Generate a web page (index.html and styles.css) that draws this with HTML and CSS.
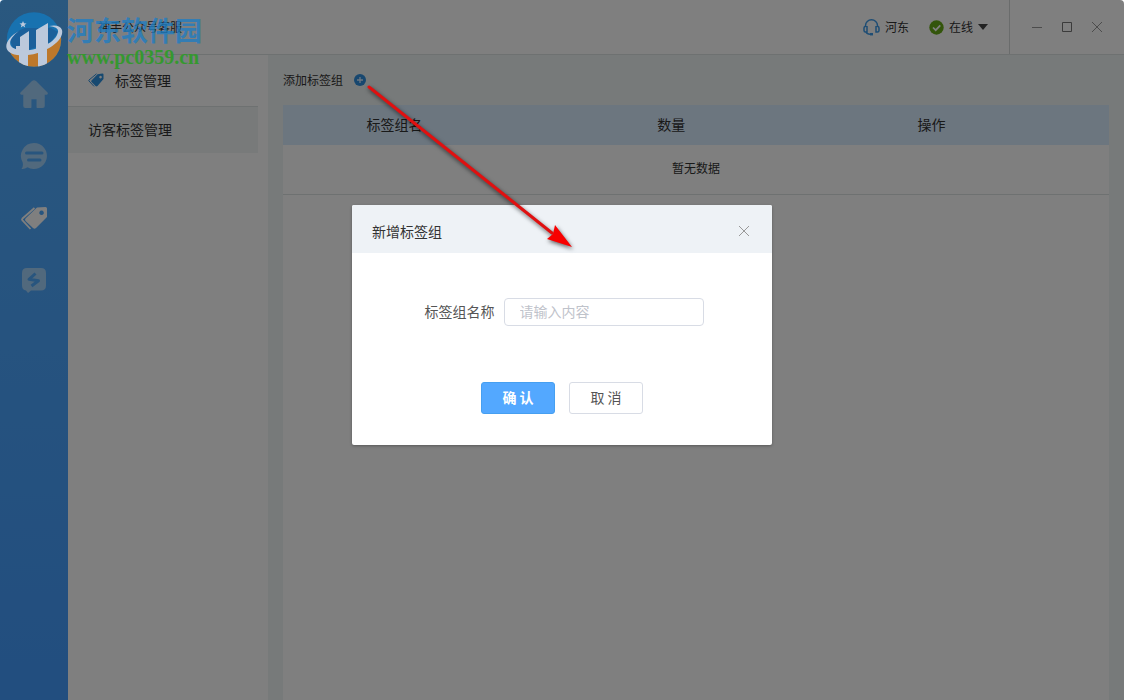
FILE: index.html
```html
<!DOCTYPE html>
<html lang="zh-CN">
<head>
<meta charset="utf-8">
<title>神手公众号客服</title>
<link rel="stylesheet" href="styles.css">
</head>
<body>
<div class="window">
  <nav class="rail" aria-label="主导航">
    <a class="rail-link" href="#home" aria-label="首页">
      <svg width="28" height="28" viewBox="0 0 28 28"><path fill="currentColor" stroke="currentColor" stroke-width="1.500" stroke-linejoin="round" d="M12.500 1.500Q14 .3 15.500 1.500L27 13Q27.300 14 26.500 14H24V26Q24 27.200 22.500 27.200H17.300V18.500H10.700V27.200H5.500Q4 27.200 4 26V14H1.500Q.7 14 1 13Z"/></svg>
    </a>
    <a class="rail-link" href="#chat" aria-label="会话">
      <svg width="28" height="28" viewBox="0 0 28 28"><path fill="currentColor" d="M14 1a13 13 0 1 1-6.500 24.300Q4.500 27.500 1.500 27q2-2 1.200-6.500A13 13 0 0 1 14 1Z"/><path class="cut" d="M6.500 11h15.500M8.500 18h11.500"/></svg>
    </a>
    <a class="rail-link active" href="#tags" aria-label="标签">
      <svg width="28" height="28" viewBox="0 0 28 28"><path fill="currentColor" fill-rule="evenodd" d="M17 3.500 25.500 3q1.500 0 1.500 1.500v8.500L16 24q-1.500 1.500-3 0L5.500 17q-1-1.200 0-2.500ZM21.500 6.500a2.300 2.300 0 1 0 .1 0Z"/><path fill="none" stroke="currentColor" stroke-width="1.800" d="M14.500 4 2.500 14.500q-1 1 0 2L10.500 25"/></svg>
    </a>
    <a class="rail-link" href="#quick" aria-label="快捷">
      <svg width="28" height="28" viewBox="0 0 28 28"><path fill="currentColor" d="M7 2h14q5 0 5 5v12.500q0 5-5 5H11L8 27l-2-2.600q-4-.5-4-4.900V7q0-5 5-5Z"/><path class="bolt" d="M15.500 7.500 9 13.300l9.500 1.400-7 5.300"/></svg>
    </a>
  </nav>

  <div class="workspace">
    <header class="titlebar">
      <h1 class="app-name">神手公众号客服</h1>
      <div class="account">
        <span class="user">
          <svg width="17" height="17" viewBox="0 0 17 17" fill="none" stroke="#3d9ae8" stroke-width="1.500"><path d="M2.500 8V6.500a6 5.700 0 0 1 12 0V8M4 7v6H2.500Q1 13 1 11.500V9Q1 7.500 2.500 7.500M13 7v6h1.500q1.500 0 1.500-1.500V9q0-1.500-1.500-1.500M3 13q1 2.200 4 2.200"/><path d="M7 15.200h3" stroke-width="2.500"/></svg>
          河东
        </span>
        <button class="status" type="button">
          <svg width="15" height="15" viewBox="0 0 15 15"><circle cx="7.500" cy="7.500" r="7.200" fill="#67ab16"/><path d="m4 7.500 2.700 2.700L11.300 5.300" fill="none" stroke="#fff" stroke-width="1.700"/></svg>
          在线
          <svg width="10" height="6" viewBox="0 0 10 6"><path d="M0 0h10L5 6Z" fill="#444"/></svg>
        </button>
      </div>
      <div class="controls">
        <button type="button" aria-label="最小化"><svg width="12" height="12" viewBox="0 0 12 12"><path d="M1 6.500h10"/></svg></button>
        <button class="maximize" type="button" aria-label="最大化"><svg width="12" height="12" viewBox="0 0 12 12"><path d="M1.500 1.500h9v9h-9Z"/></svg></button>
        <button type="button" aria-label="关闭"><svg width="12" height="12" viewBox="0 0 12 12"><path d="m1 1 10 10M11 1 1 11"/></svg></button>
      </div>
    </header>

    <div class="body">
      <aside class="side">
        <h2 class="side-title">
          <svg width="16" height="14" viewBox="0 0 16 14"><path fill="#2e92e0" fill-rule="evenodd" d="M9.500 1.200 14.500.5q1 0 1 1V6L9.500 13q-1 .8-2 0L3.500 9q-.8-.8 0-1.600ZM12.500 2.800a1.300 1.300 0 1 0 .1 0Z"/><path fill="none" stroke="#2e92e0" d="M8.500.8 1 7q-.5.500 0 1L6 13.400"/></svg>
          标签管理
        </h2>
        <a class="side-item" href="#visitor-tags">访客标签管理</a>
      </aside>
      <main class="content">
        <div class="toolbar">
          <span>添加标签组</span>
          <button class="add" type="button" aria-label="添加标签组"><svg width="12" height="12" viewBox="0 0 12 12"><circle cx="6" cy="6" r="6" fill="#2e8fde"/><path d="M6 3v6M3 6h6" stroke="#d8ebff" stroke-width="1.300"/></svg></button>
        </div>
        <div class="panel">
          <table class="groups">
            <colgroup><col class="col-name"><col class="col-count"><col class="col-action"><col></colgroup>
            <thead><tr><th scope="col">标签组名</th><th scope="col">数量</th><th scope="col">操作</th><td></td></tr></thead>
            <tbody><tr><td colspan="4">暂无数据</td></tr></tbody>
          </table>
        </div>
      </main>
    </div>
  </div>

  <div class="overlay">
    <form class="dialog" role="dialog" aria-modal="true" aria-labelledby="dialog-title">
      <div class="dialog-head">
        <h2 id="dialog-title">新增标签组</h2>
        <button class="close" type="button" aria-label="关闭"><svg width="12" height="12" viewBox="0 0 12 12"><path d="m1 1 10 10M11 1 1 11"/></svg></button>
      </div>
      <div class="field">
        <label for="group-name">标签组名称</label>
        <input id="group-name" type="text" placeholder="请输入内容">
      </div>
      <div class="actions">
        <button class="btn primary" type="button">确 认</button>
        <button class="btn" type="button">取 消</button>
      </div>
    </form>
  </div>

  <svg class="arrow" width="220" height="176" viewBox="0 0 220 176">
    <path d="M9 5 192 151" stroke="#e01010" stroke-width="3" stroke-linecap="round"/>
    <path d="M195 143 212 165 187 157 193 152Z" fill="#f80000"/>
  </svg>

  <div class="watermark">
    <svg width="58" height="58" viewBox="0 0 58 58">
      <defs><clipPath id="disc"><circle cx="29" cy="29.500" r="27.200"/></clipPath></defs>
      <g clip-path="url(#disc)">
        <path fill="#1872b0" d="M0 0h58v58H0Z"/>
        <path fill="#bd782b" d="M0 40Q32 50 58 24V58H0Z"/>
        <path fill="#1b609b" d="M5 30Q8 22 20 18L46 18 53 22 46 32 20 41 8 38Z"/>
        <path fill="#bcc9dc" d="M15 27 24 21V42H11V36H15ZM31 20 43 13V36L31 41Z"/>
        <path fill="#bcc9dc" d="M14 43h9v15h-9ZM33 42l9-4v20h-9Z"/>
      </g>
      <path fill="#bcc9dc" d="M14 21C-1 29-4 43 12 45 34 48 60 32 57 20Q55 14 44 16 54 17 53 22C51 33 31 42 15 40 1 38 3 29 14 21Z"/>
      <path fill="#bcc9dc" d="m18 11 1 2.200 2.500.2-2 1.600.7 2.500-2.200-1.400-2.200 1.400.7-2.500-2-1.600 2.500-.2Z"/>
    </svg>
    <div class="watermark-text">
      <span class="site-name">河东软件园</span>
      <span class="site-url">www.pc0359.cn</span>
    </div>
  </div>
</div>
</body>
</html>
```
FILE: styles.css
```css
* {
  box-sizing: border-box;
}

body {
  margin: 0;
  background: #fff;
  color: #333;
  font: 14px/20px "Noto Sans CJK SC", sans-serif;
}

h1, h2 {
  margin: 0;
  font-size: 14px;
  font-weight: 400;
}

button, input {
  font: inherit;
  color: inherit;
}

button {
  padding: 0;
  border: 0;
  background: none;
}

a {
  color: inherit;
  text-decoration: none;
}

svg {
  display: block;
  flex: none;
}

.window {
  position: relative;
  display: flex;
  min-height: 100vh;
  overflow: hidden;
  border-radius: 4px 4px 0 0;
  background: #fff;
}

.rail {
  display: flex;
  flex: none;
  flex-direction: column;
  align-items: center;
  gap: 34px;
  width: 68px;
  padding-top: 80px;
  background: linear-gradient(#54b0ff, #449cff);
}

.rail-link {
  color: #a2d2fa;
}

.rail-link.active {
  color: #fff;
}

.cut {
  fill: none;
  stroke: #50aafc;
  stroke-width: 3;
  stroke-linecap: round;
}

.bolt {
  fill: none;
  stroke: #50aafc;
  stroke-width: 3;
  stroke-linejoin: round;
}

.workspace {
  display: flex;
  flex: 1;
  flex-direction: column;
}

.titlebar {
  display: flex;
  align-items: center;
  height: 55px;
  border-bottom: 1px solid #dde2e2;
}

.app-name {
  flex: 1;
  padding-left: 30px;
  font-size: 12px;
}

.account {
  display: flex;
  gap: 20px;
  padding-right: 21px;
  font-size: 12px;
}

.user, .status {
  display: flex;
  align-items: center;
  gap: 5px;
}

.controls {
  display: flex;
  align-items: center;
  gap: 18px;
  height: 100%;
  padding: 0 21px;
  border-left: 1px solid #d4d8d8;
}

.controls svg, .close svg {
  fill: none;
  stroke: #999;
}

.controls .maximize svg {
  stroke: #777;
}

.body {
  display: flex;
  flex: 1;
}

.side {
  width: 200px;
  padding-right: 10px;
}

.side-title {
  display: flex;
  align-items: center;
  gap: 11px;
  height: 52px;
  padding: 0 0 2px 20px;
  border-bottom: 1px solid #dde2e2;
}

.side-item {
  display: block;
  padding: 12px 20px 14px;
  background: #f0f5f5;
}

.content {
  display: flex;
  flex: 1;
  flex-direction: column;
  padding: 15px 15px 0;
  background: #eff4f4;
}

.toolbar {
  display: flex;
  align-items: center;
  gap: 11px;
  height: 20px;
  margin-bottom: 15px;
  font-size: 12px;
}

.panel {
  flex: 1;
  background: #fff;
}

.groups {
  width: 100%;
  table-layout: fixed;
  border-collapse: collapse;
  text-align: center;
}

.col-name {
  width: 27%;
}

.col-count {
  width: 40%;
}

.col-action {
  width: 23%;
}

.groups th, .groups td {
  padding: 0 0 2px;
  font-weight: 400;
}

.groups thead {
  height: 40px;
  background: #d9ecff;
}

.groups tbody td {
  height: 49px;
  border-bottom: 1px solid #dde2e2;
  font-size: 12px;
}

.overlay {
  position: absolute;
  inset: 0;
  display: flex;
  align-items: center;
  justify-content: center;
  padding-bottom: 50px;
  background: rgba(0, 0, 0, 0.5);
}

.dialog {
  width: 420px;
  overflow: hidden;
  border-radius: 2px;
  background: #fff;
  box-shadow: 0 1px 3px rgba(0, 0, 0, 0.3);
}

.dialog-head {
  display: flex;
  align-items: center;
  justify-content: space-between;
  height: 48px;
  padding: 4px 22px 0 20px;
  background: #eef2f6;
}

.field {
  display: flex;
  align-items: center;
  justify-content: center;
  gap: 9px;
  padding: 45px 0 56px 4px;
  color: #555;
}

.field label {
  padding-bottom: 2px;
}

.field input {
  width: 200px;
  height: 28px;
  padding: 0 15px 2px;
  border: 1px solid #d8dce5;
  border-radius: 4px;
  background: #fff;
}

.field input::placeholder {
  color: #bfc3cb;
}

.actions {
  display: flex;
  justify-content: center;
  gap: 14px;
  padding-bottom: 31px;
}

.btn {
  width: 74px;
  height: 32px;
  padding-bottom: 2px;
  border: 1px solid #d8dce5;
  border-radius: 3px;
  color: #555;
}

.btn.primary {
  border-color: #469ff0;
  background: #53a8ff;
  color: #fff;
  font-weight: 700;
}

.arrow {
  position: absolute;
  top: 82px;
  left: 360px;
  filter: drop-shadow(1px 2px 2px rgba(0, 0, 0, 0.6));
  pointer-events: none;
}

.watermark {
  position: absolute;
  top: 10px;
  left: 5px;
  display: flex;
  gap: 4px;
  pointer-events: none;
}

.watermark-text {
  display: flex;
  flex-direction: column;
  padding-top: 4px;
}

.site-name {
  color: rgba(30, 125, 195, 0.8);
  font-size: 27px;
  font-weight: 700;
  line-height: 32px;
}

.site-url {
  color: #359830;
  font: 700 20px/22px "Liberation Serif", serif;
}
```
